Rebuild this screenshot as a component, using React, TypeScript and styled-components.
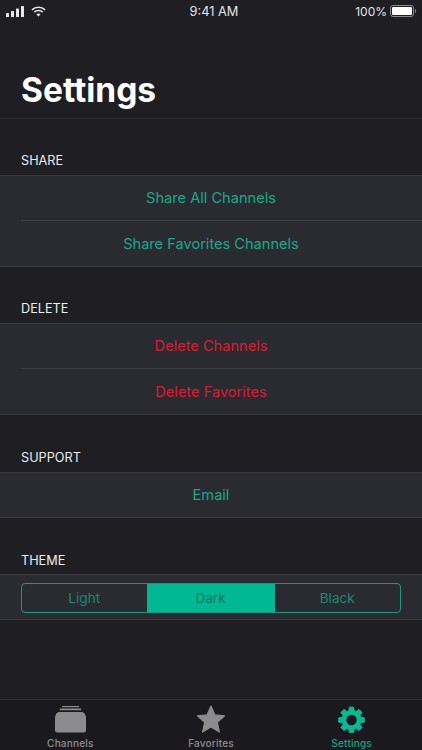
import React from 'react'
import styled, { createGlobalStyle } from 'styled-components'

const GlobalStyle = createGlobalStyle`
  html, body {
    margin: 0;
    padding: 0;
    background: #1e1e23;
  }
  * {
    box-sizing: border-box;
  }
`

const Page = styled.div`
  width: 422px;
  height: 750px;
  display: flex;
  flex-direction: column;
  overflow: hidden;
  background: #1e1e23;
  font-family: Inter, 'Noto Sans', sans-serif;
  color: #fff;
`

const StatusBar = styled.div`
  height: 22px;
  padding: 0 5px 0 6px;
  display: grid;
  grid-template-columns: 1fr auto 1fr;
  align-items: center;
  font-size: 12.8px;
  color: #e4e4e6;
`
const StatusLeft = styled.div`
  display: flex;
  align-items: center;
  gap: 7px;
`
const StatusTime = styled.span`
  margin-left: 5px;
`
const StatusRight = styled.div`
  display: flex;
  align-items: center;
  justify-content: flex-end;
  gap: 3px;
  font-size: 12px;
`

const Header = styled.div`
  height: 97px;
  padding: 48px 21px 0;
  border-bottom: 1px solid #2b2b30;
`
const Title = styled.h1`
  margin: 0;
  font-size: 33.5px;
  line-height: 40px;
  font-weight: 700;
  color: #fff;
`

const Content = styled.div`
  flex: 1;
  display: flex;
  flex-direction: column;
`
const SectionLabel = styled.div<{ $tall?: boolean; $tight?: boolean }>`
  height: ${({ $tall }) => ($tall ? 57 : 56)}px;
  display: flex;
  align-items: flex-end;
  padding: 0 21px ${({ $tight }) => ($tight ? 5 : 6)}px;
  font-size: 12.7px;
  line-height: 16px;
  color: #ececee;
`
const Group = styled.div`
  background: #2a2b30;
  border-top: 1px solid #3a3b40;
  border-bottom: 1px solid #3a3b40;
`
const Row = styled.div<{ $danger?: boolean }>`
  height: 44px;
  display: flex;
  align-items: center;
  justify-content: center;
  font-size: 14.6px;
  color: ${({ $danger }) => ($danger ? '#dc1a32' : '#19a88b')};
  & + & {
    height: 46px;
    border-top: 1px solid #3e3f44;
    margin: 0 0 0 21px;
    padding-right: 21px;
  }
`

const ThemeRow = styled.div`
  height: 44px;
  padding: 8px 21px 6px;
  display: flex;
`
const Segmented = styled.div`
  flex: 1;
  display: grid;
  grid-template-columns: 124.5px 128px 1fr;
  border: 1.5px solid #179a83;
  border-radius: 4px;
  overflow: hidden;
`
const Segment = styled.div<{ $active?: boolean }>`
  display: flex;
  align-items: center;
  justify-content: center;
  font-size: 13.6px;
  color: ${({ $active }) => ($active ? '#0f7767' : '#178a76')};
  background: ${({ $active }) => ($active ? '#00b894' : 'transparent')};
`

const TabBar = styled.div`
  height: 51px;
  display: grid;
  grid-template-columns: repeat(3, 1fr);
  background: #1a1a1e;
  border-top: 1px solid #2b2b30;
`
const Tab = styled.div<{ $active?: boolean }>`
  display: flex;
  flex-direction: column;
  align-items: center;
  padding-top: 5px;
  color: ${({ $active }) => ($active ? '#0cb795' : '#8c8c8e')};
  svg {
    display: block;
  }
`
const TabLabel = styled.span<{ $active?: boolean }>`
  margin-top: 4px;
  font-size: 10px;
  line-height: 12px;
  font-weight: 500;
  letter-spacing: 0.2px;
  color: ${({ $active }) => ($active ? '#16a385' : '#8e8e90')};
`

const gearPath = () => {
  const teeth = 8
  const points: string[] = []
  for (let i = 0; i < teeth; i++) {
    const a = (i * Math.PI * 2) / teeth - Math.PI / 2
    const step = (Math.PI * 2) / teeth
    const offsets: [number, number][] = [
      [-0.33, 9.6],
      [-0.19, 13],
      [0.19, 13],
      [0.33, 9.6],
    ]
    offsets.forEach(([o, r]) => {
      const t = a + o * step * 1.1
      points.push(`${(13.5 + Math.cos(t) * r).toFixed(2)} ${(15 + Math.sin(t) * r).toFixed(2)}`)
    })
  }
  return `M${points.join('L')}Z`
}

const Signal = () => (
  <svg width="18" height="11" viewBox="0 0 18 11" fill="#e8e8ea">
    <rect x="0" y="7" width="3" height="4" rx="0.6" />
    <rect x="5" y="5" width="3" height="6" rx="0.6" />
    <rect x="10" y="2.5" width="3" height="8.5" rx="0.6" />
    <rect x="15" y="0" width="3" height="11" rx="0.6" />
  </svg>
)

const Wifi = () => (
  <svg width="15" height="11" viewBox="0 0 15 11" fill="none" stroke="#e8e8ea" strokeWidth="1.6">
    <path d="M1 3.8C4.6 0.4 10.4 0.4 14 3.8" />
    <path d="M3.3 6.1C5.6 4 9.4 4 11.7 6.1" />
    <path d="M7.5 10.6L5.4 8.3C6.6 7.3 8.4 7.3 9.6 8.3Z" fill="#e8e8ea" stroke="none" />
  </svg>
)

const Battery = () => (
  <svg width="27" height="12" viewBox="0 0 27 12">
    <rect x="0.5" y="0.5" width="23" height="11" rx="2.5" fill="none" stroke="#8b8b8e" />
    <rect x="2" y="2" width="20" height="8" rx="1.2" fill="#fff" />
    <path d="M25 4v4c.7-.2 1.2-1 1.2-2s-.5-1.800-1.200-2z" fill="#8b8b8e" />
  </svg>
)

const ChannelsIcon = () => (
  <svg width="31" height="28" viewBox="0 0 31 28" fill="currentColor">
    <rect x="7" y="1" width="17" height="1.2" />
    <path d="M5.500 3.600h20c.4 0 .7.300.8.800v.900h-21.600v-.900c.1-.5.400-.8.800-.800z" />
    <path d="M4.500 7h22c2 0 3.500 1.500 4 3.500.3 1 .5 2 .5 3v11.500a2.500 2.500 0 0 1-2.500 2.500h-26a2.500 2.500 0 0 1-2.500-2.500v-11.500c0-1 .2-2 .5-3 .5-2 2-3.500 4-3.500z" />
  </svg>
)

const StarIcon = () => (
  <svg width="30" height="28" viewBox="0 0 30 28" fill="currentColor" stroke="currentColor" strokeWidth="1.2" strokeLinejoin="round">
    <path d="M15 1l3.900 8.900 9.700 1-7.300 6.500 2.100 9.600L15 22l-8.400 5 2.100-9.600-7.300-6.500 9.700-1z" />
  </svg>
)

const GearIcon = () => (
  <svg width="27" height="28" viewBox="0 0 27 28" fill="currentColor">
    <path d={gearPath()} stroke="currentColor" strokeWidth="1" strokeLinejoin="round" />
    <circle cx="13.500" cy="15" r="5.200" fill="#1a1a1e" />
  </svg>
)

const App = () => (
  <Page>
    <GlobalStyle />
    <StatusBar>
      <StatusLeft>
        <Signal />
        <Wifi />
      </StatusLeft>
      <StatusTime>9:41 AM</StatusTime>
      <StatusRight>
        <span>100%</span>
        <Battery />
      </StatusRight>
    </StatusBar>
    <Header>
      <Title>Settings</Title>
    </Header>
    <Content>
      <SectionLabel>SHARE</SectionLabel>
      <Group>
        <Row>Share All Channels</Row>
        <Row>Share Favorites Channels</Row>
      </Group>
      <SectionLabel>DELETE</SectionLabel>
      <Group>
        <Row $danger>Delete Channels</Row>
        <Row $danger>Delete Favorites</Row>
      </Group>
      <SectionLabel $tall>SUPPORT</SectionLabel>
      <Group>
        <Row>Email</Row>
      </Group>
      <SectionLabel $tight>THEME</SectionLabel>
      <Group>
        <ThemeRow>
          <Segmented>
            <Segment>Light</Segment>
            <Segment $active>Dark</Segment>
            <Segment>Black</Segment>
          </Segmented>
        </ThemeRow>
      </Group>
    </Content>
    <TabBar>
      <Tab>
        <ChannelsIcon />
        <TabLabel>Channels</TabLabel>
      </Tab>
      <Tab>
        <StarIcon />
        <TabLabel>Favorites</TabLabel>
      </Tab>
      <Tab $active>
        <GearIcon />
        <TabLabel $active>Settings</TabLabel>
      </Tab>
    </TabBar>
  </Page>
)

export default App
